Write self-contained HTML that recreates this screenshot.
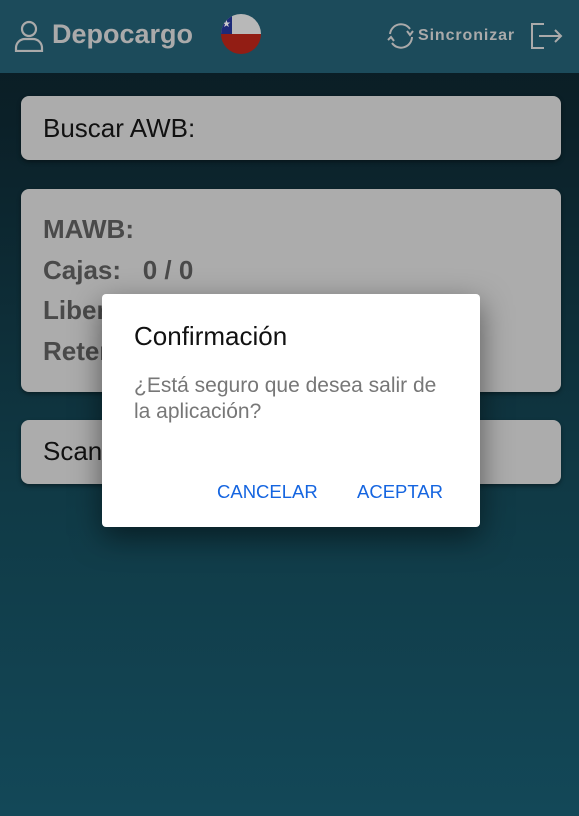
<!DOCTYPE html>
<html><head><style>
*{margin:0;padding:0;box-sizing:border-box}
body{width:579px;height:816px;overflow:hidden;position:relative;font-family:"Liberation Sans",Arial,sans-serif;background:linear-gradient(#0a1c22 0px,#0b2028 120px,#103a46 500px,#134858 816px)}
.hdr{position:absolute;left:0;top:0;width:579px;height:73px;background:#1c4b5b}
.card{position:absolute;left:21px;width:540px;background:#acacac;border-radius:8px;box-shadow:0 2px 4px rgba(0,0,0,.4)}
.t{position:absolute;left:22px;font-size:26px;color:#111}
.b{position:absolute;left:22px;font-size:26px;font-weight:bold;color:#4a4a4a}
.dlg{position:absolute;left:102px;top:294px;width:378px;height:233px;background:#fff;border-radius:4px;box-shadow:0 10px 30px rgba(0,0,0,.5)}
</style></head><body>
<div class="hdr">
<svg style="position:absolute;left:14px;top:20px" width="30" height="32" viewBox="0 0 30 32" fill="none" stroke="#aaa" stroke-width="2.2"><circle cx="15" cy="9" r="7"/><path d="M2 31v-3a9 9 0 0 1 9-9h8a9 9 0 0 1 9 9v3z"/></svg>
<div style="position:absolute;left:52px;top:19px;font-size:27px;font-weight:bold;color:#aaa">Depocargo</div>
<svg style="position:absolute;left:220px;top:13px" width="42" height="42" viewBox="0 0 42 42"><clipPath id="c"><circle cx="21" cy="21" r="20"/></clipPath><g clip-path="url(#c)"><rect width="42" height="21" fill="#b8b8b8"/><rect y="21" width="42" height="21" fill="#921d14"/><rect width="12" height="21" fill="#1c2a78"/><text x="2" y="14" font-size="10" fill="#ccc">★</text></g></svg>
<svg style="position:absolute;left:385px;top:22px" width="32" height="28" viewBox="0 0 32 28" fill="none" stroke="#aaa" stroke-width="2"><path d="M5 12a11 11 0 0 1 20-5"/><path d="M27 15a11 11 0 0 1-20 6"/><path d="M28 9l-3 4-3-4"/><path d="M3 18l3-3 3 4"/></svg>
<div style="position:absolute;left:418px;top:27px;font-size:16px;letter-spacing:0.9px;font-weight:bold;color:#aaa">Sincronizar</div>
<svg style="position:absolute;left:530px;top:22px" width="34" height="28" viewBox="0 0 34 28" fill="none" stroke="#aaa" stroke-width="2"><path d="M14 2H2v24h12"/><path d="M9 14h22M25 8l6 6-6 6"/></svg>
</div>
<div class="card" style="top:96px;height:64px"><div class="t" style="top:17px">Buscar AWB:</div></div>
<div class="card" style="top:189px;height:203px">
<div class="b" style="top:25px">MAWB:</div>
<div class="b" style="top:66px">Cajas:&nbsp;&nbsp; 0 / 0</div>
<div class="b" style="top:106px">Liberadas:</div>
<div class="b" style="top:147px">Retenidas:</div>
</div>
<div class="card" style="top:420px;height:64px"><div class="t" style="top:16px">Scanear</div></div>
<div class="dlg">
<div style="position:absolute;left:32px;top:27px;font-size:26px;color:#111">Confirmación</div>
<div style="position:absolute;left:32px;top:79px;width:318px;font-size:21px;line-height:26px;color:#777">¿Está seguro que desea salir de la aplicación?</div>
<div style="position:absolute;left:115px;top:187px;font-size:18.5px;color:#1565e0">CANCELAR</div>
<div style="position:absolute;left:255px;top:187px;font-size:18.5px;color:#1565e0">ACEPTAR</div>
</div>
</body></html>
